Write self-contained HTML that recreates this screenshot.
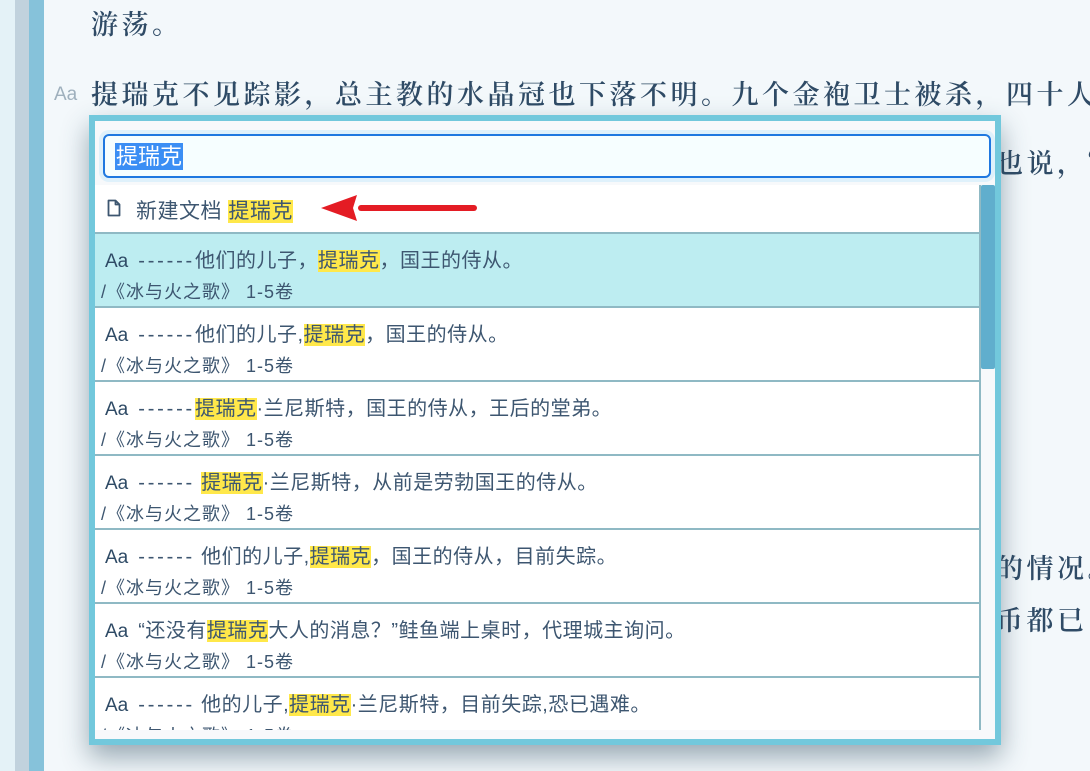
<!DOCTYPE html>
<html><head><meta charset="utf-8"><style>
*{margin:0;padding:0;box-sizing:border-box}
body{width:1090px;height:771px;overflow:hidden;background:#f3f8fb;position:relative;font-family:"Liberation Sans","Noto Sans CJK SC",sans-serif;color:#34506a}
.s1{position:absolute;left:0;top:0;width:15px;height:771px;background:#e4f2f7}
.s2{position:absolute;left:15px;top:0;width:14px;height:771px;background:#c1d2dd}
.s3{position:absolute;left:29px;top:0;width:15px;height:771px;background:#86c2da}
.t{position:absolute;font-family:"Noto Serif CJK SC",serif;font-size:27px;color:#2f4b66;white-space:nowrap;letter-spacing:3.5px;font-weight:600}
.aa{position:absolute;left:54px;top:84px;font-size:19px;color:#9fb0bd}
.dlg{position:absolute;left:89px;top:115px;width:912px;height:630px;background:#72c8dc;box-shadow:0 12px 25px rgba(40,70,90,.45)}
.in{position:absolute;left:6px;top:6px;width:900px;height:618px;background:#f7f9fb}
.inp{position:absolute;left:8px;top:13px;width:888px;height:44px;border:2px solid #1f78e0;border-radius:6px;background:#f6feff;box-shadow:0 0 0 4px #dff1fb}
.sel{position:absolute;left:10px;top:7px;background:#3b8ef4;color:#fff;font-size:22px;line-height:27px;padding:0 1px}
.list{position:absolute;left:0;top:64px;width:886px;height:545px;overflow:hidden;background:#fff;border-right:2px solid #8fb9c4}
.row{position:absolute;left:0;width:886px;height:74px;border-top:2px solid #8fb9c4;background:#fff}
.row .m{position:absolute;left:10px;top:10px;font-size:20px;white-space:nowrap;color:#3d5670;letter-spacing:.5px}
.row .m b{font-weight:normal;font-size:19px;color:#2f4b66;margin-right:10px;letter-spacing:0}
.d{letter-spacing:2.8px}
.row .p{position:absolute;left:6px;top:44px;font-size:18px;color:#3d5670;white-space:nowrap;letter-spacing:1px}
.hl{background:#ffe84a}
.sb{position:absolute;left:886px;top:64px;width:14px;height:545px;background:#f7f9fb}
.sbt{position:absolute;left:886px;top:64px;width:14px;height:184px;background:#60aecd;border-radius:2px}
</style></head><body>
<div class="s1"></div><div class="s2"></div><div class="s3"></div>
<div class="t" style="left:91px;top:3px">游荡。</div>
<div class="aa">Aa</div>
<div class="t" style="left:91px;top:73px">提瑞克不见踪影，总主教的水晶冠也下落不明。九个金袍卫士被杀，四十人</div>
<div class="t" style="left:996px;top:142px">也说，“</div>
<div class="t" style="left:996px;top:547px">的情况。</div>
<div class="t" style="left:996px;top:599px">币都已</div>
<div class="dlg"><div class="in">
<div class="inp"><span class="sel">提瑞克</span></div>
<div class="list">
<div class="row" style="top:0;height:47px;border-top:none">
<svg style="position:absolute;left:12px;top:14px" width="14" height="18" viewBox="0 0 14 18"><path d="M1.5 1.5h7l4 4v11h-11z M8.5 1.5v4h4" fill="none" stroke="#3d5670" stroke-width="1.8" stroke-linejoin="round"/></svg>
<div class="m" style="left:41px;top:10px;font-size:21px">新建文档 <span class="hl">提瑞克</span></div>
<svg style="position:absolute;left:226px;top:8px" width="160" height="30"><path d="M40 15H153" stroke="#e41c24" stroke-width="6" stroke-linecap="round"/><path d="M0 15L36 2L32 15L36 28Z" fill="#e41c24"/></svg>
</div>
<div class="row" style="top:47px;background:#bdedf1"><div class="m"><b>Aa</b><span class="d">------</span>他们的儿子，<span class="hl">提瑞克</span>，国王的侍从。</div><div class="p">/《冰与火之歌》 1-5卷</div></div>
<div class="row" style="top:121px"><div class="m"><b>Aa</b><span class="d">------</span>他们的儿子,<span class="hl">提瑞克</span>，国王的侍从。</div><div class="p">/《冰与火之歌》 1-5卷</div></div>
<div class="row" style="top:195px"><div class="m"><b>Aa</b><span class="d">------</span><span class="hl">提瑞克</span>·兰尼斯特，国王的侍从，王后的堂弟。</div><div class="p">/《冰与火之歌》 1-5卷</div></div>
<div class="row" style="top:269px"><div class="m"><b>Aa</b><span class="d">------</span> <span class="hl">提瑞克</span>·兰尼斯特，从前是劳勃国王的侍从。</div><div class="p">/《冰与火之歌》 1-5卷</div></div>
<div class="row" style="top:343px"><div class="m"><b>Aa</b><span class="d">------</span> 他们的儿子,<span class="hl">提瑞克</span>，国王的侍从，目前失踪。</div><div class="p">/《冰与火之歌》 1-5卷</div></div>
<div class="row" style="top:417px"><div class="m"><b>Aa</b>“还没有<span class="hl">提瑞克</span>大人的消息？”鲑鱼端上桌时，代理城主询问。</div><div class="p">/《冰与火之歌》 1-5卷</div></div>
<div class="row" style="top:491px"><div class="m"><b>Aa</b><span class="d">------</span> 他的儿子,<span class="hl">提瑞克</span>·兰尼斯特，目前失踪,恐已遇难。</div><div class="p">/《冰与火之歌》 1-5卷</div></div>
</div>
<div class="sb"></div><div class="sbt"></div>
</div></div>
</body></html>
